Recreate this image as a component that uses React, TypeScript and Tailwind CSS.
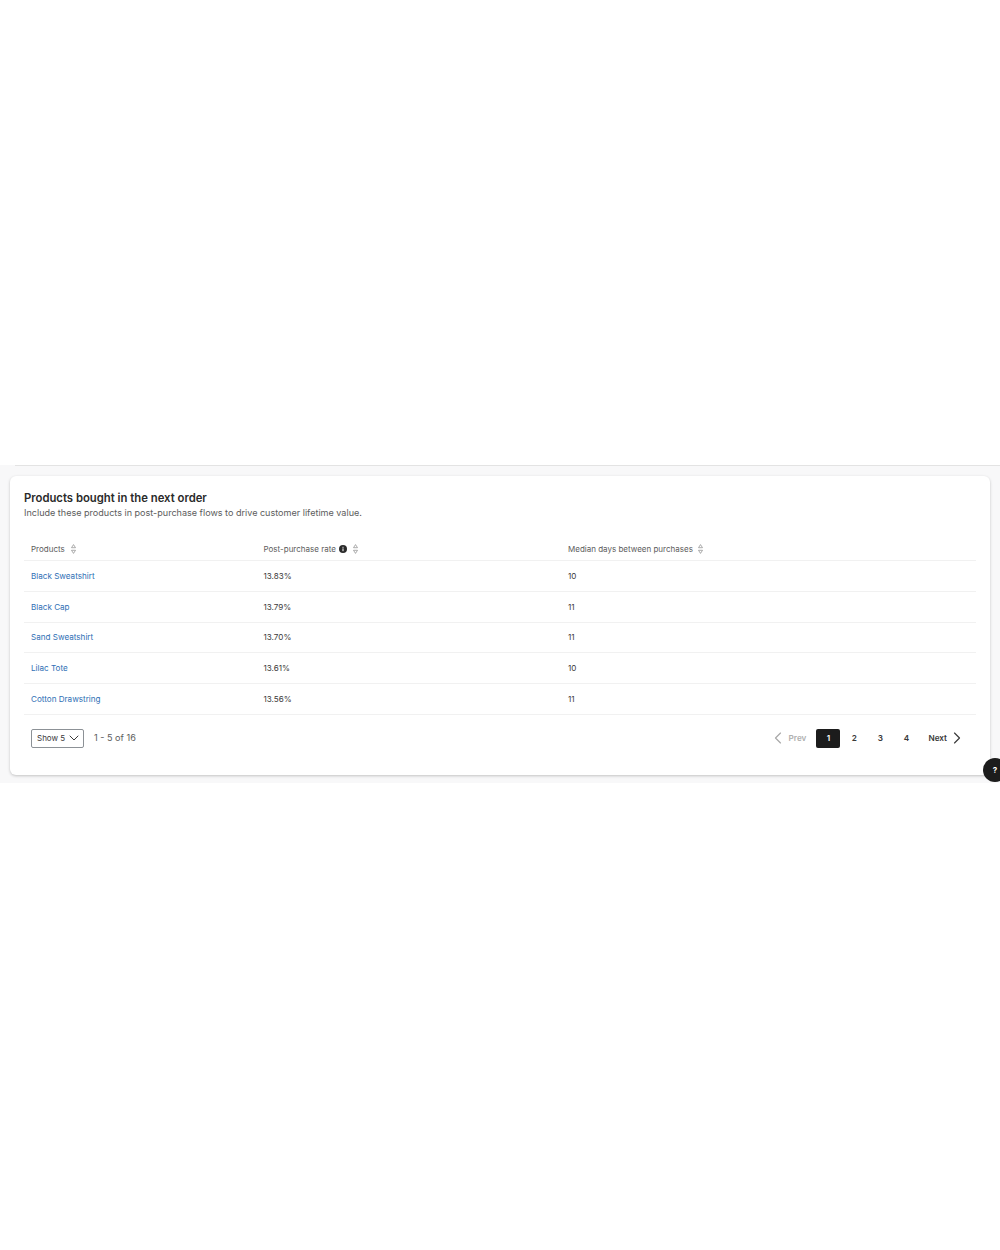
import React from "react";
import { ChevronDown, ChevronLeft, ChevronRight } from "lucide-react";

interface ProductRow {
  name: string;
  rate: string;
  days: string;
  height: string;
}

const rows: ProductRow[] = [
  { name: "Black Sweatshirt", rate: "13.83%", days: "10", height: "h-[31px]" },
  { name: "Black Cap", rate: "13.79%", days: "11", height: "h-[31px]" },
  { name: "Sand Sweatshirt", rate: "13.70%", days: "11", height: "h-[30px]" },
  { name: "Lilac Tote", rate: "13.61%", days: "10", height: "h-[31px]" },
  { name: "Cotton Drawstring", rate: "13.56%", days: "11", height: "h-[31px]" },
];

const SortIcon = () => (
  <svg width="5" height="10" viewBox="0 0 5 10" fill="none" stroke="#8a8a8a" strokeWidth="0.7">
    <path d="M2.5 0.6 L4.5 3.7 H0.5 Z" />
    <path d="M2.5 9.4 L4.5 6.3 H0.5 Z" />
  </svg>
);

const InfoIcon = () => (
  <svg width="8" height="8" viewBox="0 0 8 8" className="ml-[3px]">
    <circle cx="4" cy="4" r="4" fill="#2a2a2a" />
    <rect x="3.5" y="3.4" width="1" height="2.8" fill="#ffffff" />
    <rect x="3.5" y="1.8" width="1" height="1" fill="#ffffff" />
  </svg>
);

export default function App() {
  return (
    <div className="relative min-h-[1250px] bg-white font-['Inter',sans-serif] overflow-hidden">
      <div className="h-[465px]" />

      {/* Section band */}
      <div className="h-[318px] bg-[#f8f8f9] pt-[11px] px-[10px]">
        <div className="h-[299px] rounded-[6px] bg-white pt-[15px] px-[14px] shadow-[0_1px_3px_rgba(0,0,0,0.22)]">
          <h2 className="text-[11.3px] leading-[15px] font-semibold text-[#2a2a2a]">
            Products bought in the next order
          </h2>
          <p className="text-[9.05px] leading-[13px] text-[#5c5c5c]">
            Include these products in post-purchase flows to drive customer lifetime value.
          </p>

          {/* Table */}
          <div className="mt-[19px] text-[8.1px] text-[#3a3a3a]">
            <div className="grid h-[23px] grid-cols-[232.5px_304.5px_1fr] items-center border-b border-[#f1f1f1] pl-[7px] text-[8px] text-[#5c5c5c]">
              <div className="flex items-center gap-[6px]">
                Products <SortIcon />
              </div>
              <div className="flex items-center">
                Post-purchase rate <InfoIcon />
                <span className="ml-[6px] flex">
                  <SortIcon />
                </span>
              </div>
              <div className="flex items-center gap-[5px]">
                Median days between purchases <SortIcon />
              </div>
            </div>
            {rows.map((row) => (
              <div
                key={row.name}
                className={`grid grid-cols-[232.5px_304.5px_1fr] items-center border-b border-[#f1f1f1] pl-[7px] ${row.height}`}
              >
                <a className="text-[#2f6fb5]">{row.name}</a>
                <div>{row.rate}</div>
                <div>{row.days}</div>
              </div>
            ))}
          </div>

          {/* Footer */}
          <div className="mt-[13px] flex items-center justify-between pl-[7px] pr-[9px]">
            <div className="flex items-center gap-[10px]">
              <div className="flex h-[19px] w-[53px] items-center justify-between rounded-[2px] border border-[#8c9196] pl-[5px] text-[8px] whitespace-nowrap text-[#3a3a3a]">
                Show 5 <ChevronDown size={16} strokeWidth={1.5} className="mr-[1px] shrink-0" />
              </div>
              <span className="text-[9.1px] text-[#5c5c5c]">1 - 5 of 16</span>
            </div>
            <div className="flex items-center text-[8.2px] font-semibold text-[#3a3a3a]">
              <ChevronLeft size={20} strokeWidth={1.4} className="mr-[1px] text-[#a8a8a8]" />
              <span className="mr-[10px] text-[#b0b0b0]">Prev</span>
              <span className="flex h-[19px] w-[24px] items-center justify-center rounded-[2px] bg-[#1c1c1c] text-white">
                1
              </span>
              <span className="flex w-[28px] justify-center">2</span>
              <span className="flex w-[24px] justify-center">3</span>
              <span className="flex w-[28px] justify-center">4</span>
              <span className="ml-[8px]">Next</span>
              <ChevronRight size={20} strokeWidth={1.4} />
            </div>
          </div>
        </div>
      </div>

      {/* Help button */}
      <div className="absolute left-[983px] top-[758px] flex h-[24px] w-[24px] items-center justify-center rounded-full bg-[#1c1c1c] text-[8px] font-bold text-white">
        ?
      </div>

      <div className="absolute left-[15px] right-0 top-[465px] h-px bg-[#e3e3e3]" />
    </div>
  );
}
